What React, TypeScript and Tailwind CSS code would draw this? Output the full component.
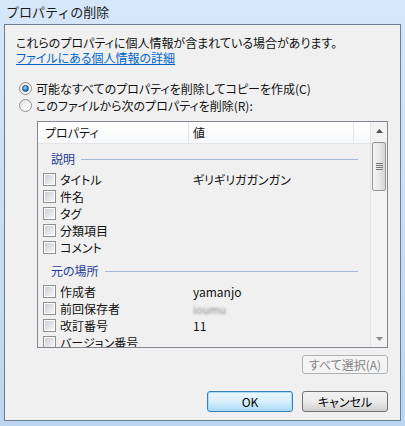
import React from 'react';

// Win7 style "remove properties" dialog

type Row = { label: string; value?: string; blurred?: boolean };
type Group = { title: string; rows: Row[] };

const groups: Group[] = [
  {
    title: '説明',
    rows: [
      { label: 'タイトル', value: 'ギリギリガガンガン' },
      { label: '件名' },
      { label: 'タグ' },
      { label: '分類項目' },
      { label: 'コメント' },
    ],
  },
  {
    title: '元の場所',
    rows: [
      { label: '作成者', value: 'yamanjo' },
      { label: '前回保存者', value: 'ioumu', blurred: true },
      { label: '改訂番号', value: '11' },
      { label: 'バージョン番号' },
    ],
  },
];

const font = "font-['Noto_Sans_CJK_JP','Noto_Sans',sans-serif] [font-feature-settings:'palt']";

function Radio({ checked }: { checked?: boolean }) {
  return (
    <div className="w-[13px] h-[13px] rounded-full border border-[#8e8f8f] bg-gradient-to-br from-[#e6e6e6] to-[#ffffff] flex items-center justify-center shrink-0">
      {checked && (
        <div className="w-[7px] h-[7px] rounded-full bg-[radial-gradient(circle_at_40%_35%,#a9e0ff,#1a7fd0_60%,#0d4d8f)] border border-[#1c5180]" />
      )}
    </div>
  );
}

function Checkbox() {
  return (
    <div className="w-[13px] h-[13px] border border-[#8e8f8f] bg-white flex items-center justify-center shrink-0">
      <div className="w-[9px] h-[9px] bg-gradient-to-br from-[#cbcfd5] to-[#f6f6f6]" />
    </div>
  );
}

function Button({ label, primary, disabled }: { label: string; primary?: boolean; disabled?: boolean }) {
  let cls = 'border-[#707070] bg-gradient-to-b from-[#f2f2f2] via-[#ebebeb] to-[#cfcfcf] text-black';
  if (primary) cls = 'border-[#3c7fb1] bg-gradient-to-b from-[#eaf6fd] via-[#d9f0fc] to-[#a7d9f5] text-black shadow-[inset_0_0_0_1px_#a9dcf6]';
  if (disabled) cls = 'border-[#adb2b5] bg-[#f4f4f4] text-[#838383]';
  return (
    <div className={`w-[86px] rounded-[3px] border flex items-center justify-center text-[12px] ${cls}`}>
      {label}
    </div>
  );
}

function Scrollbar() {
  return (
    <div className="w-[17px] h-full flex flex-col bg-[#f3f3f3] border-l border-[#e4e4e4]">
      <div className="h-[17px] flex items-center justify-center">
        <svg width="7" height="4" viewBox="0 0 7 4"><path d="M0 4 L3.5 0 L7 4 Z" fill="#4d4d4d" /></svg>
      </div>
      <div className="mt-[3px] mx-[1px] h-[49px] rounded-[2px] border border-[#959595] bg-gradient-to-r from-[#f3f3f3] via-[#e8e8e8] to-[#d6d6d6] flex flex-col items-center justify-center gap-[1px]">
        <div className="w-[7px] h-[1px] bg-[#777]" />
        <div className="w-[7px] h-[1px] bg-[#777]" />
        <div className="w-[7px] h-[1px] bg-[#777]" />
        <div className="w-[7px] h-[1px] bg-[#777]" />
      </div>
      <div className="flex-1" />
      <div className="h-[17px] flex items-center justify-center">
        <svg width="7" height="4" viewBox="0 0 7 4"><path d="M0 0 L7 0 L3.5 4 Z" fill="#8a8a8a" /></svg>
      </div>
    </div>
  );
}

export default function App() {
  return (
    <div className={`w-[405px] h-[426px] bg-gradient-to-b from-[#d6e7f9] to-[#bcd6f1] flex flex-col ${font}`}>
      {/* title bar */}
      <div className="h-[24px] flex items-center pl-[6px] text-[13px] text-[#1a1a1a] [font-feature-settings:normal]">
        プロパティの削除
      </div>

      {/* client area */}
      <div className="mx-[4px] mb-[5px] flex-1 bg-[#f0f0f0] border border-[#6d7d90] pt-[11px] pl-[11px] text-[12px] leading-[14px] text-[#111] flex flex-col">
        <div className="h-[14px]">これらのプロパティに個人情報が含まれている場合があります。</div>
        <div className="h-[15px] mt-px text-[#0066cc] underline underline-offset-1">ファイルにある個人情報の詳細</div>

        <div className="mt-[14px] h-[17px] flex items-center gap-[4px] pl-[3px]">
          <Radio checked />
          <span>可能なすべてのプロパティを削除してコピーを作成(C)</span>
        </div>
        <div className="h-[17px] flex items-center gap-[4px] pl-[3px]">
          <Radio />
          <span>このファイルから次のプロパティを削除(R):</span>
        </div>

        {/* list view */}
        <div className="mt-[7px] ml-[21px] w-[351px] h-[227px] border border-[#828790] bg-[#f0f0f0] flex overflow-hidden">
          <div className="flex-1 flex flex-col overflow-hidden">
            <div className="h-[22px] shrink-0 flex bg-gradient-to-b from-[#ffffff] to-[#f7f8f9] border-b border-[#e5e5e5]">
              <div className="w-[151px] pl-[7px] flex items-center border-r border-[#e5e5e5]">プロパティ</div>
              <div className="w-[165px] pl-[4px] flex items-center border-r border-[#e5e5e5]">値</div>
              <div className="flex-1" />
            </div>
            {groups.map((g) => (
              <div key={g.title} className="flex flex-col">
                <div className="mt-[3px] h-[24px] shrink-0 flex items-center pl-[13px] pr-[12px] gap-[6px]">
                  <span className="text-[#1e3c96]">{g.title}</span>
                  <div className="flex-1 h-px bg-[#a3b6dc]" />
                </div>
                {g.rows.map((r) => (
                  <div key={r.label} className="h-[17px] shrink-0 flex items-center">
                    <div className="w-[155px] pl-[5px] flex items-center gap-[4px]">
                      <Checkbox />
                      <span>{r.label}</span>
                    </div>
                    {r.value && (
                      <span className={r.blurred ? 'blur-[1px] text-[#8a8a8a] text-[11px]' : ''}>{r.value}</span>
                    )}
                  </div>
                ))}
              </div>
            ))}
          </div>
          <Scrollbar />
        </div>

        <div className="mt-[7px] ml-[286px] h-[19px] flex">
          <Button label="すべて選択(A)" disabled />
        </div>

        <div className="mt-[17px] ml-[191px] h-[21px] flex gap-[9px]">
          <Button label="OK" primary />
          <Button label="キャンセル" />
        </div>
      </div>
    </div>
  );
}
